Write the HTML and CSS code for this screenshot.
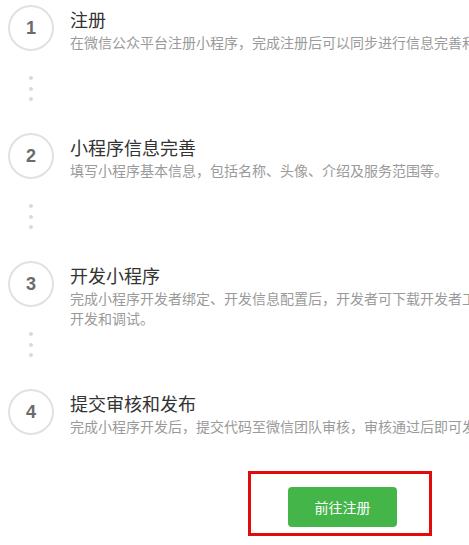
FILE: index.html
```html
<!DOCTYPE html>
<html lang="zh-CN">
<head>
<meta charset="utf-8">
<title>小程序注册流程</title>
<link rel="stylesheet" href="styles.css">
</head>
<body>
<div class="page">
  <ol class="steps">
    <li class="step">
      <div class="step-marker">
        <div class="step-num">1</div>
        <div class="connector"><span class="dot"></span><span class="dot"></span><span class="dot"></span></div>
      </div>
      <div class="step-body">
        <h3 class="step-title">注册</h3>
        <p class="step-desc">在微信公众平台注册小程序，完成注册后可以同步进行信息完善和开发。</p>
      </div>
    </li>
    <li class="step">
      <div class="step-marker">
        <div class="step-num">2</div>
        <div class="connector"><span class="dot"></span><span class="dot"></span><span class="dot"></span></div>
      </div>
      <div class="step-body">
        <h3 class="step-title">小程序信息完善</h3>
        <p class="step-desc">填写小程序基本信息，包括名称、头像、介绍及服务范围等。</p>
      </div>
    </li>
    <li class="step">
      <div class="step-marker">
        <div class="step-num">3</div>
        <div class="connector"><span class="dot"></span><span class="dot"></span><span class="dot"></span></div>
      </div>
      <div class="step-body">
        <h3 class="step-title">开发小程序</h3>
        <p class="step-desc">完成小程序开发者绑定、开发信息配置后，开发者可下载开发者工具、参考开发文档进行小程序的开发和调试。</p>
      </div>
    </li>
    <li class="step">
      <div class="step-marker">
        <div class="step-num">4</div>
      </div>
      <div class="step-body">
        <h3 class="step-title">提交审核和发布</h3>
        <p class="step-desc">完成小程序开发后，提交代码至微信团队审核，审核通过后即可发布（公测期间不能发布）。</p>
      </div>
    </li>
  </ol>
  <div class="actions">
    <a class="btn-primary" href="#">前往注册</a>
  </div>
  <div class="highlight-box"></div>
</div>
</body>
</html>
```
FILE: styles.css
```css
html {
  overflow: hidden;
}

body {
  margin: 0;
  padding: 0;
  background: #fff;
  font-family: "Noto Sans CJK SC", "Liberation Sans", sans-serif;
  color: #333;
}

.page {
  position: relative;
  width: 685px;
  padding-top: 5px;
  padding-bottom: 18px;
}

.steps {
  list-style: none;
  margin: 0;
  padding: 0;
}

.step {
  display: flex;
  align-items: flex-start;
}

.step-marker {
  display: flex;
  flex-direction: column;
  align-items: center;
  width: 46px;
  margin-left: 8px;
  flex-shrink: 0;
}

.step-num {
  box-sizing: border-box;
  width: 46px;
  height: 46px;
  border: 2px solid #e1e1e1;
  border-radius: 50%;
  display: flex;
  align-items: center;
  justify-content: center;
  font-family: "Liberation Sans", Arial, sans-serif;
  font-weight: bold;
  font-size: 18px;
  color: #6b6b6b;
}

.connector {
  box-sizing: border-box;
  height: 82px;
  padding-top: 25px;
  display: flex;
  flex-direction: column;
  align-items: center;
  gap: 6.5px;
}

.dot {
  width: 4px;
  height: 4px;
  border-radius: 50%;
  background: #dadada;
}

.step-body {
  margin-left: 16px;
  width: 610px;
}

.step-title {
  margin: 2px 0 0;
  font-size: 18px;
  line-height: 24px;
  font-weight: normal;
  color: #333;
}

.step-desc {
  margin: 1px 0 0;
  font-size: 14px;
  line-height: 20px;
  color: #9a9a9a;
}

.actions {
  display: flex;
  justify-content: center;
  margin-top: 51px;
}

.btn-primary {
  display: flex;
  align-items: center;
  justify-content: center;
  width: 109px;
  height: 40px;
  border-radius: 4px;
  background: #44b549;
  color: #fff;
  font-size: 14px;
  text-decoration: none;
}

.highlight-box {
  position: absolute;
  left: 248px;
  top: 471px;
  box-sizing: border-box;
  width: 184px;
  height: 65px;
  border: 3px solid #e20a0a;
}
```
